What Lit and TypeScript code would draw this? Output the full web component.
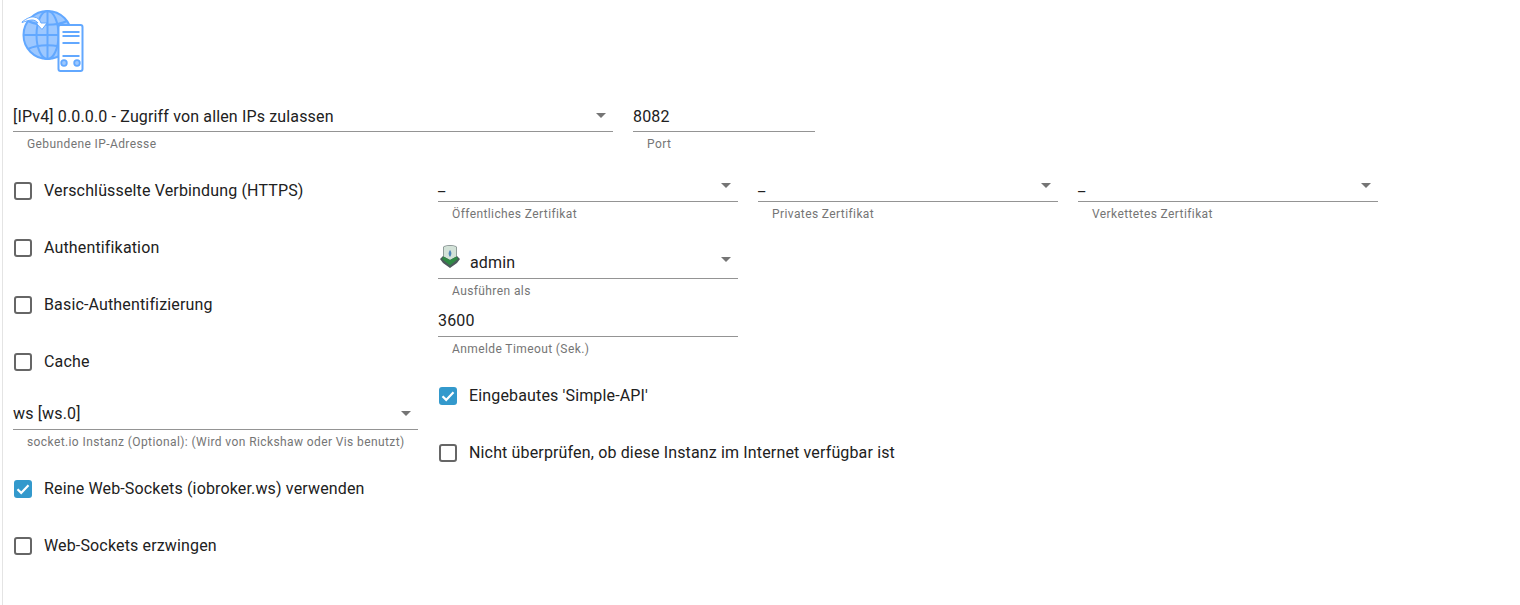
import { LitElement, html, css, svg } from "lit";
import { customElement } from "lit/decorators.js";

const logo = svg`<svg class="logo" width="66" height="66" viewBox="0 0 66 66" fill="none">
  <circle cx="27.5" cy="27" r="24" fill="#9dc8ff" stroke="#62a8ff" stroke-width="2"/>
  <g stroke="#62a8ff" stroke-width="2">
    <ellipse cx="27.5" cy="27" rx="11" ry="24"/>
    <path d="M27.5 3v48M3.5 27h48"/>
    <path d="M8 13c10 5 29 5 39 0M8 41c10-5 29-5 39 0"/>
  </g>
  <path d="M2 14C7 10 11 8.500 14 9c4 .5 6 3 7 6h6l-5 6.500-6-6.500h2c-1.500-2-3.500-3-6-3-3 0-7 1.500-10 2.500z" fill="#fff" stroke="#62a8ff" stroke-width="1"/>
  <rect x="38.500" y="17" width="24" height="46" rx="2" fill="#fff" stroke="#62a8ff" stroke-width="2"/>
  <path d="M42.500 24h17M42.500 28h17M42.500 35h17M42.500 48h17" stroke="#62a8ff" stroke-width="1.800"/>
  <circle cx="44" cy="55" r="2.800" fill="#9dc8ff" stroke="#62a8ff" stroke-width="1.800"/>
  <circle cx="57" cy="55" r="2.800" fill="#9dc8ff" stroke="#62a8ff" stroke-width="1.800"/>
</svg>`;

const avatar = svg`<svg class="avatar" width="20" height="24" viewBox="0 0 20 24">
  <path d="M4 1c4-1 8-1 12 0l1 2v8l3 3-3 4-7 5-7-5-3-4 3-3V3z" fill="#4c5a5c"/>
  <path d="M4 1.500c4-1 8-1 12 0l.5 2v8L10 15 3.500 11.500v-8z" fill="#d3e2d8"/>
  <path d="M3.500 11.500L10 15l6.500-3.500L18 14l-8 6.500L2 14z" fill="#2f8a45"/>
  <path d="M10 5c1.800 2 1.800 5 0 7-1.800-2-1.800-5 0-7z" fill="#4f86b8"/>
</svg>`;

@customElement("app-root")
export class AppRoot extends LitElement {
  static styles = css`
    :host {
      display: block;
      height: 605px;
      box-sizing: border-box;
      margin-left: 2px;
      border-left: 1px solid #e4e4e4;
      padding: 8px 0 0 10px;
      background: #fff;
      font-family: Roboto, "Liberation Sans", sans-serif;
      color: #212121;
      overflow: hidden;
    }
    .logo { display: block; margin-left: 7px; }
    .top { display: flex; gap: 20px; margin-top: 26px; }
    .field { display: flex; flex-direction: column; flex: none; }
    .control {
      display: flex;
      align-items: center;
      height: 32px;
      padding-top: 2px;
      border-bottom: 1px solid #949494;
      font-size: 16px;
      line-height: 20px;
      letter-spacing: 0.15px;
      box-sizing: border-box;
    }
    .grow { flex: 1; white-space: nowrap; }
    .arrow {
      width: 0; height: 0; flex: none;
      border-left: 5px solid transparent;
      border-right: 5px solid transparent;
      border-top: 5px solid #757575;
      margin-right: 7px;
      margin-top: -2px;
    }
    .lbl {
      font-size: 12px;
      line-height: 13px;
      letter-spacing: 0.4px;
      color: #757575;
      margin: 6px 0 0 14px;
      white-space: nowrap;
    }
    .w600 { width: 600px; }
    .w182 { width: 182px; }
    .w405 { width: 405px; }
    .w300 { width: 300px; }
    .cols { display: flex; gap: 20px; margin-top: 29px; }
    .left { width: 405px; flex: none; display: flex; flex-direction: column; }
    .right { display: flex; flex-direction: column; margin-top: -10px; }
    .certs { display: flex; gap: 20px; }
    .certs .control, .wsf .control, .timeout .control { padding-top: 0; }
    .certs .arrow, .wsf .arrow { margin-top: 0; }
    .check {
      display: flex;
      align-items: center;
      gap: 12px;
      height: 21px;
      margin-left: 1px;
      margin-bottom: 36px;
      font-size: 16px;
      letter-spacing: 0.15px;
      white-space: nowrap;
    }
    .box {
      width: 18px; height: 18px; box-sizing: border-box; flex: none;
      border: 2px solid #666; border-radius: 3px;
    }
    .box.on {
      background: #3399cc; border: none;
      display: flex; align-items: center; justify-content: center;
    }
    .wsf { margin-bottom: 29px; margin-top: -10px; }
    .admin { height: 42px; padding-top: 11px; }
    .admin .arrow { margin-top: -8px; }
    .avatar { margin: -13px 10px 0 2px; flex: none; }
    .admin-field { margin-top: 16px; }
    .timeout { margin-top: 7px; }
    .simple { margin-top: 29px; }
  `;

  private select(label: string, value: string, cls: string) {
    return html`<div class="field ${cls}">
      <div class="control"><span class="grow">${value}</span><span class="arrow"></span></div>
      <div class="lbl">${label}</div>
    </div>`;
  }

  private check(label: string, on = false) {
    return html`<div class="check">
      ${on
        ? html`<span class="box on"><svg width="14" height="14" viewBox="0 0 14 14" fill="none"><path d="M1.500 7.200l3.700 3.700L12.500 3.300" stroke="#fff" stroke-width="2.200"/></svg></span>`
        : html`<span class="box"></span>`}
      <span>${label}</span>
    </div>`;
  }

  render() {
    return html`
      ${logo}
      <div class="top">
        ${this.select("Gebundene IP-Adresse", "[IPv4] 0.0.0.0 - Zugriff von allen IPs zulassen", "w600")}
        <div class="field w182">
          <div class="control"><span class="grow">8082</span></div>
          <div class="lbl">Port</div>
        </div>
      </div>
      <div class="cols">
        <div class="left">
          ${this.check("Verschlüsselte Verbindung (HTTPS)")}
          ${this.check("Authentifikation")}
          ${this.check("Basic-Authentifizierung")}
          ${this.check("Cache")}
          ${this.select("socket.io Instanz (Optional): (Wird von Rickshaw oder Vis benutzt)", "ws [ws.0]", "w405 wsf")}
          ${this.check("Reine Web-Sockets (iobroker.ws) verwenden", true)}
          ${this.check("Web-Sockets erzwingen")}
        </div>
        <div class="right">
          <div class="certs">
            ${this.select("Öffentliches Zertifikat", "_", "w300")}
            ${this.select("Privates Zertifikat", "_", "w300")}
            ${this.select("Verkettetes Zertifikat", "_", "w300")}
          </div>
          <div class="field w300 admin-field">
            <div class="control admin">${avatar}<span class="grow">admin</span><span class="arrow"></span></div>
            <div class="lbl">Ausführen als</div>
          </div>
          <div class="field w300 timeout">
            <div class="control"><span class="grow">3600</span></div>
            <div class="lbl">Anmelde Timeout (Sek.)</div>
          </div>
          <div class="simple">
            ${this.check("Eingebautes 'Simple-API'", true)}
            ${this.check("Nicht überprüfen, ob diese Instanz im Internet verfügbar ist")}
          </div>
        </div>
      </div>
    `;
  }
}
